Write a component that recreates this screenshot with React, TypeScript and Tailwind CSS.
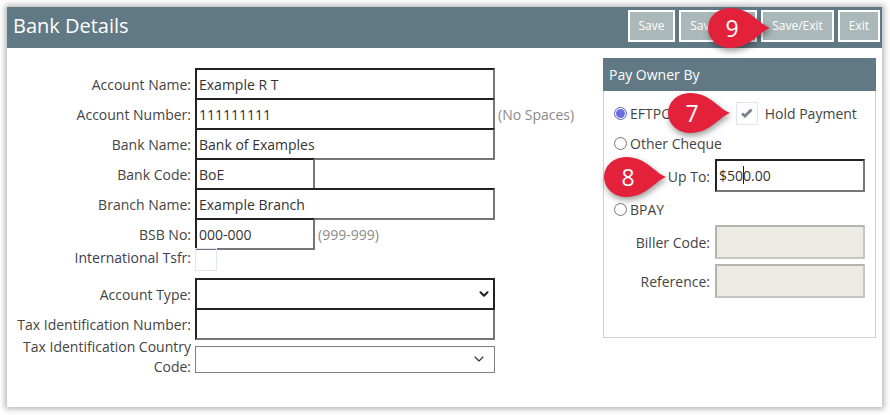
import { ChevronDown } from "lucide-react"

const inset = "border-2 border-t-[#222] border-l-[#222] border-r-[#767676] border-b-[#767676]"
const disabledBox = "ml-[5px] w-[150px] h-[34px] bg-[#ebebe4] border-2 border-t-[#b4b4ae] border-l-[#b4b4ae] border-r-[#c6c6c0] border-b-[#c6c6c0]"

function Field({ label, value, width = "w-[300px]", hint }: { label: string; value?: string; width?: string; hint?: string }) {
    return (
        <div className="flex h-[30px] items-center">
            <label className="w-[184px] text-right shrink-0">{label}</label>
            <input
                readOnly
                value={value ?? ""}
                className={`${width} ${inset} ml-[4px] h-[32px] px-[2px] text-[14px] text-[#333] outline-none shrink-0`}
            />
            {hint && <span className="ml-[3px] text-[#8a8a8a]">{hint}</span>}
        </div>
    )
}

function Callout({ n, className }: { n: number; className: string }) {
    return (
        <div className={`absolute w-[62px] h-[40px] ${className}`}>
            <svg width="62" height="40" viewBox="0 0 62 40" className="absolute inset-0 overflow-visible drop-shadow-[1px_3px_3px_rgba(0,0,0,0.4)]">
                <path d="M62 20C51 16 42 0 22 0A22 20 0 0 0 22 40C42 40 51 24 62 20Z" fill="#e3213a" />
            </svg>
            <span className="absolute left-0 top-0 w-[48px] h-[40px] flex items-center justify-center text-white text-[23px] font-['Open_Sans',sans-serif]">{n}</span>
        </div>
    )
}

function Radio({ label, checked }: { label: string; checked?: boolean }) {
    return (
        <div className="flex items-center h-[30px] pl-[10px]">
            <span className={`w-[13px] h-[13px] rounded-full border flex items-center justify-center bg-white ${checked ? "border-[#5b5fd6]" : "border-[#767676]"}`}>
                {checked && <span className="w-[9px] h-[9px] rounded-full bg-[#6a6fe0]" />}
            </span>
            <span className="ml-[3px]">{label}</span>
        </div>
    )
}

function HeaderButton({ label, width }: { label: string; width: string }) {
    return (
        <button className={`${width} h-[32px] border-2 border-white bg-[#abb8b9] text-white text-[12px]`}>{label}</button>
    )
}

export default function App() {
    return (
        <div className="relative w-[890px] h-[415px] bg-white overflow-hidden pt-[7px] pl-[7px] font-['Open_Sans',sans-serif] text-[14px] text-[#444]">
            <div className="w-[875px] h-[400px] bg-white shadow-[0_0_6px_2px_rgba(0,0,0,0.3)]">
                <div className="h-[41px] bg-[#607985] flex justify-between pl-[6px] pr-[2px] pt-[3px]">
                    <h1 className="text-[20px] leading-[32px] text-white">Bank Details</h1>
                    <div className="flex gap-[4px]">
                        <HeaderButton label="Save" width="w-[47px]" />
                        <HeaderButton label="Save/New" width="w-[78px]" />
                        <HeaderButton label="Save/Exit" width="w-[73px]" />
                        <HeaderButton label="Exit" width="w-[42px]" />
                    </div>
                </div>

                <div className="flex">
                    <div className="w-[596px] pt-[21px]">
                        <Field label="Account Name:" value="Example R T" />
                        <Field label="Account Number:" value="111111111" hint="(No Spaces)" />
                        <Field label="Bank Name:" value="Bank of Examples" />
                        <Field label="Bank Code:" value="BoE" width="w-[120px]" />
                        <Field label="Branch Name:" value="Example Branch" />
                        <Field label="BSB No:" value="000-000" width="w-[120px]" hint="(999-999)" />
                        <div className="flex h-[30px] items-start">
                            <label className="w-[184px] text-right shrink-0 leading-[18px] text-[#3d3d55]">International Tsfr:</label>
                            <span className="relative ml-[4px] w-[22px] h-[23px] border border-[#e0e4f5] -mt-[1px]" />
                        </div>
                        <div className="flex h-[30px] items-center">
                            <label className="w-[184px] text-right shrink-0">Account Type:</label>
                            <div className="relative ml-[4px] w-[300px] h-[32px] border-2 border-[#222]">
                                <ChevronDown size={14} strokeWidth={3.5} className="absolute right-[2px] top-[7px] text-[#222]" />
                            </div>
                        </div>
                        <Field label="Tax Identification Number:" />
                        <div className="flex -mt-[2px]">
                            <label className="w-[184px] text-right shrink-0 leading-[20px]">Tax Identification Country Code:</label>
                            <div className="relative ml-[4px] w-[300px] h-[27px] mt-[9px] border border-[#808080]">
                                <ChevronDown size={16} strokeWidth={1.75} className="absolute right-[7px] top-[4px] text-[#333]" />
                            </div>
                        </div>
                    </div>

                    <div className="w-[273px] h-[280px] mt-[10px] border border-[#d0d0d0] border-t-0">
                        <div className="h-[33px] -mx-[1px] bg-[#607985] text-white flex items-center pl-[6px]">Pay Owner By</div>
                        <div className="pt-[7px]">
                            <div className="flex items-center">
                                <Radio label="EFTPOS" checked />
                                <span className="ml-[56px] w-[22px] h-[23px] border border-[#e0e4f5] flex items-center justify-center">
                                    <svg width="12" height="10" viewBox="0 0 12 10">
                                        <path d="M1 5.5L4 8L10.5 1.5" fill="none" stroke="#7a7f92" strokeWidth="2.8" />
                                    </svg>
                                </span>
                                <span className="ml-[7px]">Hold Payment</span>
                            </div>
                            <Radio label="Other Cheque" />
                            <div className="flex items-center h-[36px]">
                                <label className="w-[106px] text-right shrink-0">Up To:</label>
                                <div className={`relative ml-[5px] w-[150px] h-[33px] -mt-[1px] ${inset} flex items-center px-[2px] text-[#333]`}>
                                    $500.00
                                    <span className="absolute left-[26px] top-[5px] h-[18px] w-px bg-[#222]" />
                                </div>
                            </div>
                            <Radio label="BPAY" />
                            <div className="flex items-center h-[39px] -mt-[2px]">
                                <label className="w-[106px] text-right shrink-0 pt-[2px]">Biller Code:</label>
                                <div className={disabledBox} />
                            </div>
                            <div className="flex items-center h-[39px]">
                                <label className="w-[106px] text-right shrink-0 pt-[2px]">Reference:</label>
                                <div className={disabledBox} />
                            </div>
                        </div>
                    </div>
                </div>
            </div>

            <Callout n={9} className="left-[708px] top-[8px]" />
            <Callout n={7} className="left-[668px] top-[93px]" />
            <Callout n={8} className="left-[604px] top-[157px]" />
        </div>
    )
}
